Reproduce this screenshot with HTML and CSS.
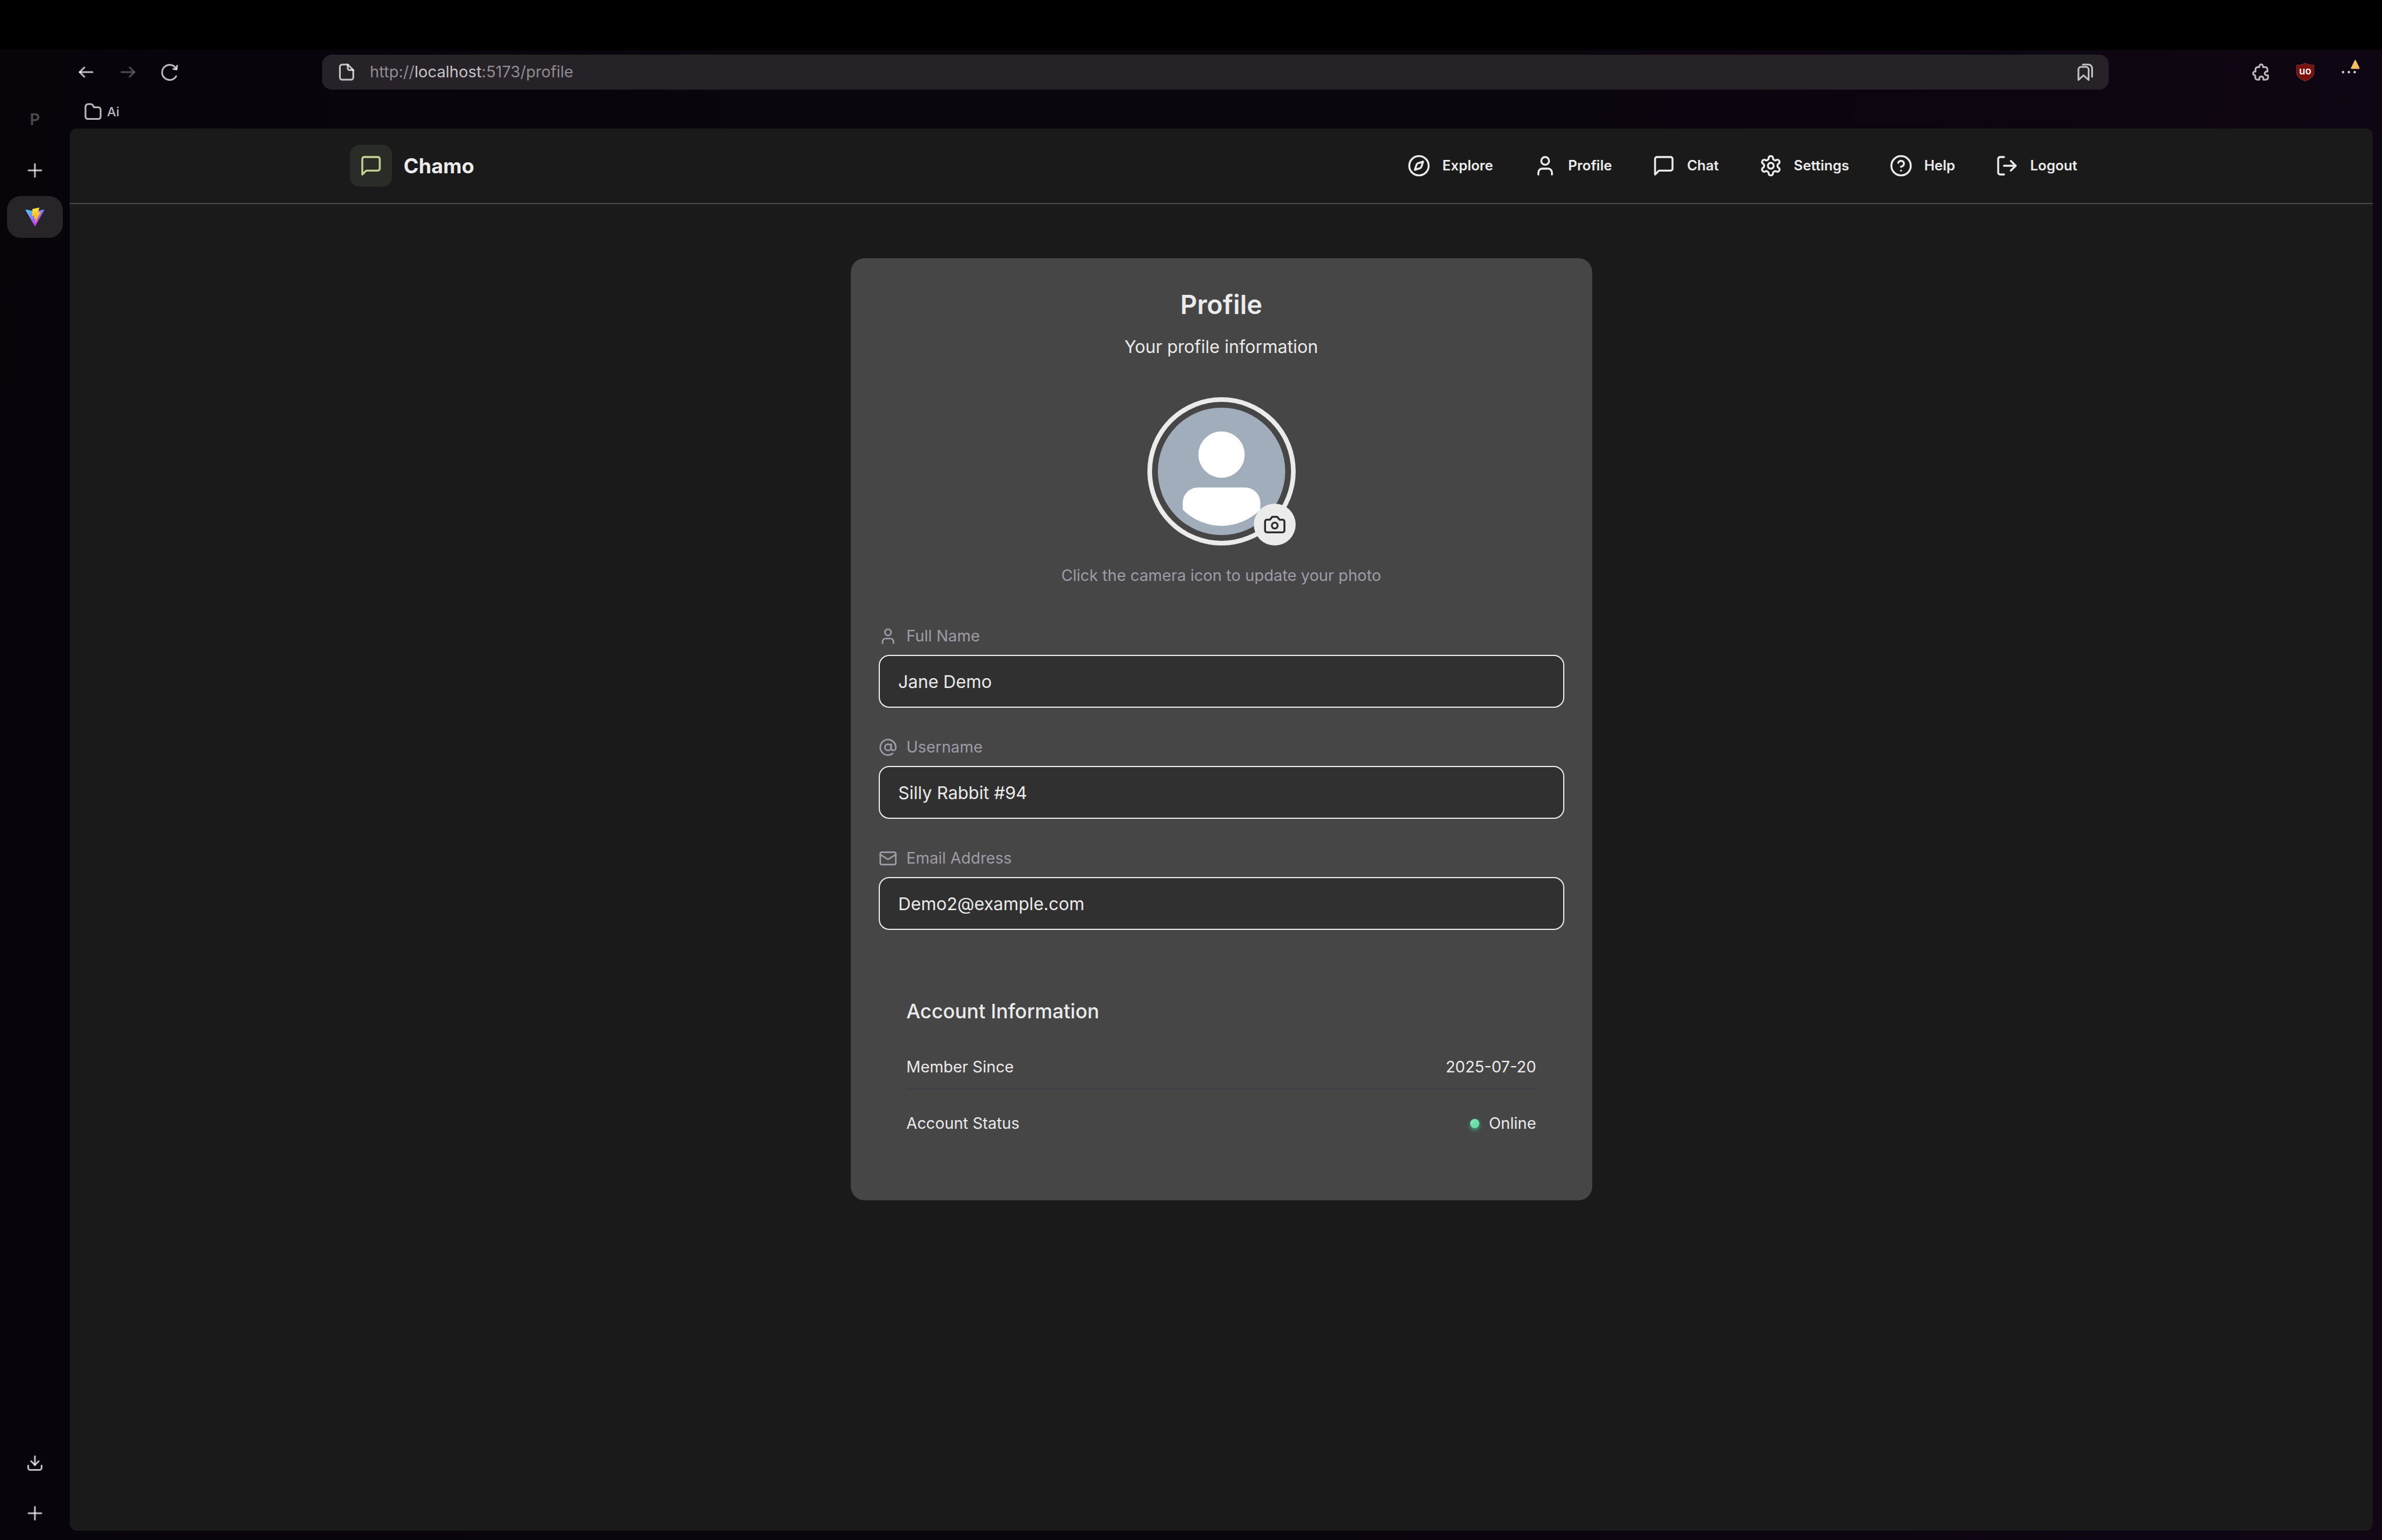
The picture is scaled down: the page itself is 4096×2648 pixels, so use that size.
FILE: index.html
```html
<!DOCTYPE html>
<html lang="en">
<head>
<meta charset="utf-8">
<title>Chamo - Profile</title>
<link rel="stylesheet" href="styles.css">
</head>
<body>
<div class="screen-strip"></div>
<div class="browser">
  <aside class="sidebar">
    <div class="space-name">P</div>
    <button class="icon-btn new-tab" aria-label="New tab">
      <svg class="glyph" viewBox="0 0 32 32"><path d="M16 5v22"/><path d="M5 16h22"/></svg>
    </button>
    <button class="tab" aria-label="Chamo tab">
      <svg class="vite" viewBox="0 0 256 257">
        <defs>
          <linearGradient id="va" x1="0" y1="0.08" x2="0.6" y2="0.85"><stop offset="0" stop-color="#41d1ff"/><stop offset="1" stop-color="#bd34fe"/></linearGradient>
          <linearGradient id="vb" x1="0.43" y1="0.02" x2="0.54" y2="0.9"><stop offset="0" stop-color="#ffea83"/><stop offset="0.083" stop-color="#ffdd35"/><stop offset="1" stop-color="#ffa800"/></linearGradient>
        </defs>
        <path fill="url(#va)" d="M255.153 37.938L134.897 252.976c-2.483 4.44-8.862 4.466-11.382.048L.875 37.958c-2.746-4.814 1.371-10.646 6.827-9.67l120.385 21.517a6.537 6.537 0 0 0 2.322-.004l117.867-21.483c5.438-.991 9.574 4.796 6.877 9.62Z"/>
        <path fill="url(#vb)" d="M185.432.063L96.44 17.501a3.268 3.268 0 0 0-2.634 3.014l-5.474 92.456a3.268 3.268 0 0 0 3.997 3.378l24.777-5.718c2.318-.535 4.413 1.507 3.936 3.838l-7.361 36.047c-.495 2.426 1.782 4.5 4.151 3.78l15.304-4.649c2.372-.72 4.652 1.36 4.15 3.788l-11.698 56.621c-.732 3.542 3.979 5.473 5.943 2.437l1.313-2.028l72.516-144.72c1.215-2.423-.88-5.186-3.54-4.672l-25.505 4.922c-2.396.462-4.435-1.77-3.759-4.114l16.646-57.705c.677-2.35-1.37-4.583-3.769-4.113Z"/>
      </svg>
    </button>
    <div class="sidebar-foot">
      <button class="icon-btn" aria-label="Downloads">
        <svg class="glyph" viewBox="0 0 32 32"><path d="M16 4v15"/><path d="M9.500 12.500 16 19l6.500-6.500"/><path d="M4.500 20v4a3.500 3.500 0 0 0 3.500 3.500h16a3.500 3.500 0 0 0 3.500-3.500v-4"/></svg>
      </button>
      <button class="icon-btn" aria-label="Create new">
        <svg class="glyph" viewBox="0 0 32 32"><path d="M16 5v22"/><path d="M5 16h22"/></svg>
      </button>
    </div>
  </aside>

  <div class="window">
    <div class="toolbar">
      <div class="toolbar-nav">
        <button class="icon-btn" aria-label="Back"><svg class="glyph" viewBox="0 0 32 32"><path d="M27 16H5"/><path d="M13 8 5 16l8 8"/></svg></button>
        <button class="icon-btn" aria-label="Forward" disabled><svg class="glyph" viewBox="0 0 32 32"><path d="M5 16h22"/><path d="M19 8l8 8-8 8"/></svg></button>
        <button class="icon-btn" aria-label="Reload"><svg class="glyph" viewBox="0 0 32 32"><path d="M27 23a13 13 0 1 1 0-13"/><path d="M28.500 5l-1 6.500-5.500-1"/></svg></button>
      </div>
      <div class="urlbar">
        <svg class="glyph" viewBox="0 0 32 32"><path d="M18 3H8.500A4 4 0 0 0 4.500 7v18a4 4 0 0 0 4 4h15a4 4 0 0 0 4-4V12.500z"/><path d="M18 3v6.500a3 3 0 0 0 3 3h6.500"/></svg>
        <div class="url">http://<b>localhost</b>:5173/profile</div>
        <svg class="glyph" viewBox="0 0 32 32"><path d="M4 29.500V11.500A4.500 4.500 0 0 1 8.500 7H17a4.500 4.500 0 0 1 4.500 4.500v18l-8.750-8z"/><path d="M11.500 3H21a6.500 6.500 0 0 1 6.500 6.500V24"/></svg>
      </div>
      <div class="toolbar-actions">
        <button class="icon-btn" aria-label="Extensions"><svg class="glyph" viewBox="0 0 32 32"><path d="M13 7.500V6a3.200 3.200 0 0 1 6.400 0v1.500H23.500A3.500 3.500 0 0 1 27 11v4h-1.500a3.200 3.200 0 0 0 0 6.400H28v4a3.500 3.500 0 0 1-3.500 3.500H20v-2a3.500 3.500 0 0 0-7 0v2H9.500A3.500 3.500 0 0 1 6 25.500v-4.100H5.500a3.200 3.200 0 0 1 0-6.400H6.500v-4A3.500 3.500 0 0 1 10 7.500z"/></svg></button>
        <button class="icon-btn" aria-label="uBlock Origin"><svg class="ublock" viewBox="0 0 32 32"><path d="M16 .5C12 3 6 4 1 4v13c0 7 7 11.500 15 14.500 8-3 15-7.500 15-14.500V4C26 4 20 3 16 .5z"/><text x="16" y="20" text-anchor="middle">uo</text></svg></button>
        <button class="icon-btn menu" aria-label="Menu"><svg class="dots" viewBox="0 0 32 32"><circle cx="5" cy="16" r="2.200"/><circle cx="15" cy="16" r="2.200"/><circle cx="25" cy="16" r="2.200"/></svg><svg class="warn" viewBox="0 0 20 20"><path d="M10 3 3.500 16.500h13z"/></svg></button>
      </div>
    </div>
    <div class="bookmarks">
      <button class="bookmark"><svg class="glyph" viewBox="0 0 32 32"><path d="M3 7.500A4.500 4.500 0 0 1 7.500 3h4.600a4 4 0 0 1 3.200 1.600L17.500 8.500H25A4 4 0 0 1 29 12.500v12a4 4 0 0 1-4 4H7a4 4 0 0 1-4-4z"/></svg>Ai</button>
    </div>

    <div class="page">
      <header class="header">
        <div class="header-inner">
          <a class="brand" href="#"><span class="brand-mark"><svg class="icon" viewBox="0 0 24 24"><path d="M21 15a2 2 0 0 1-2 2H7l-4 4V5a2 2 0 0 1 2-2h14a2 2 0 0 1 2 2z"/></svg></span>Chamo</a>
          <nav class="nav">
            <a href="#"><svg class="icon" viewBox="0 0 24 24"><circle cx="12" cy="12" r="10"/><path d="m16.240 7.760-1.804 5.411a2 2 0 0 1-1.265 1.265L7.760 16.240l1.804-5.411a2 2 0 0 1 1.265-1.265z"/></svg>Explore</a>
            <a href="#"><svg class="icon" viewBox="0 0 24 24"><path d="M19 21v-2a4 4 0 0 0-4-4H9a4 4 0 0 0-4 4v2"/><circle cx="12" cy="7" r="4"/></svg>Profile</a>
            <a href="#"><svg class="icon" viewBox="0 0 24 24"><path d="M21 15a2 2 0 0 1-2 2H7l-4 4V5a2 2 0 0 1 2-2h14a2 2 0 0 1 2 2z"/></svg>Chat</a>
            <a href="#"><svg class="icon" viewBox="0 0 24 24"><path d="M12.220 2h-.44a2 2 0 0 0-2 2v.18a2 2 0 0 1-1 1.730l-.43.25a2 2 0 0 1-2 0l-.15-.08a2 2 0 0 0-2.730.73l-.22.38a2 2 0 0 0 .73 2.730l.15.1a2 2 0 0 1 1 1.720v.51a2 2 0 0 1-1 1.740l-.15.09a2 2 0 0 0-.73 2.730l.22.38a2 2 0 0 0 2.730.73l.15-.08a2 2 0 0 1 2 0l.43.25a2 2 0 0 1 1 1.730V20a2 2 0 0 0 2 2h.44a2 2 0 0 0 2-2v-.18a2 2 0 0 1 1-1.730l.43-.25a2 2 0 0 1 2 0l.15.08a2 2 0 0 0 2.730-.73l.22-.39a2 2 0 0 0-.73-2.730l-.15-.08a2 2 0 0 1-1-1.740v-.5a2 2 0 0 1 1-1.740l.15-.09a2 2 0 0 0 .73-2.730l-.22-.38a2 2 0 0 0-2.730-.73l-.15.08a2 2 0 0 1-2 0l-.43-.25a2 2 0 0 1-1-1.730V4a2 2 0 0 0-2-2z"/><circle cx="12" cy="12" r="3"/></svg>Settings</a>
            <a href="#"><svg class="icon" viewBox="0 0 24 24"><circle cx="12" cy="12" r="10"/><path d="M9.090 9a3 3 0 0 1 5.830 1c0 2-3 3-3 3"/><path d="M12 17h.01"/></svg>Help</a>
            <a href="#"><svg class="icon" viewBox="0 0 24 24"><path d="M9 21H5a2 2 0 0 1-2-2V5a2 2 0 0 1 2-2h4"/><path d="m16 17 5-5-5-5"/><path d="M21 12H9"/></svg>Logout</a>
          </nav>
        </div>
      </header>

      <main class="main">
        <section class="card">
          <h1>Profile</h1>
          <p class="subtitle">Your profile information</p>
          <div class="avatar">
            <svg class="photo" viewBox="0 0 220 220" role="img" aria-label="Profile photo">
              <circle cx="110" cy="110" r="110" fill="#a2adbc"/>
              <circle cx="110" cy="81" r="40" fill="#fff"/>
              <path fill="#fff" d="M43 176V164a26 26 0 0 1 26-26h82a26 26 0 0 1 26 26v12a94 94 0 0 1-134 0z"/>
            </svg>
            <button class="camera" aria-label="Update photo"><svg class="icon" viewBox="0 0 24 24"><path d="M14.500 4h-5L7 7H4a2 2 0 0 0-2 2v9a2 2 0 0 0 2 2h16a2 2 0 0 0 2-2V9a2 2 0 0 0-2-2h-3l-2.500-3z"/><circle cx="12" cy="13" r="3"/></svg></button>
          </div>
          <p class="hint">Click the camera icon to update your photo</p>

          <form class="fields">
            <div class="field">
              <label for="name"><svg class="icon" viewBox="0 0 24 24"><path d="M19 21v-2a4 4 0 0 0-4-4H9a4 4 0 0 0-4 4v2"/><circle cx="12" cy="7" r="4"/></svg>Full Name</label>
              <input id="name" type="text" value="Jane Demo">
            </div>
            <div class="field">
              <label for="user"><svg class="icon" viewBox="0 0 24 24"><circle cx="12" cy="12" r="4"/><path d="M16 8v5a3 3 0 0 0 6 0v-1a10 10 0 1 0-4 8"/></svg>Username</label>
              <input id="user" type="text" value="Silly Rabbit #94">
            </div>
            <div class="field">
              <label for="email"><svg class="icon" viewBox="0 0 24 24"><rect x="2" y="4" width="20" height="16" rx="2"/><path d="m22 7-8.970 5.700a1.940 1.940 0 0 1-2.060 0L2 7"/></svg>Email Address</label>
              <input id="email" type="email" value="Demo2@example.com">
            </div>
          </form>

          <div class="account">
            <h2>Account Information</h2>
            <dl>
              <div class="row"><dt>Member Since</dt><dd>2025-07-20</dd></div>
              <div class="row"><dt>Account Status</dt><dd><span class="status"></span>Online</dd></div>
            </dl>
          </div>
        </section>
      </main>
    </div>
  </div>
</div>
</body>
</html>
```
FILE: styles.css
```css
* { box-sizing: border-box; }

body {
  margin: 0;
  min-height: 100vh;
  display: flex;
  flex-direction: column;
  background: #000;
  color: #ebebeb;
  font-family: Inter, "Liberation Sans", sans-serif;
  font-size: 27px;
  line-height: 40px;
}

button {
  margin: 0;
  padding: 0;
  border: 0;
  background: none;
  color: inherit;
  font: inherit;
}

a { color: inherit; text-decoration: none; }

h1, h2, p, dl, dd { margin: 0; }

.screen-strip { height: 86px; }

.browser {
  flex: 1;
  display: flex;
  background: linear-gradient(100deg, #07040a 0%, #0b050d 30%, #0b050e 60%, #100614 100%);
}

/* Browser chrome */

.glyph {
  width: 32px;
  height: 32px;
  flex: none;
  fill: none;
  stroke: #fff;
  stroke-opacity: 0.72;
  stroke-width: 3;
  stroke-linecap: round;
  stroke-linejoin: round;
}

.icon-btn {
  width: 56px;
  height: 56px;
  display: grid;
  place-items: center;
}

.icon-btn:disabled { opacity: 0.4; }

.sidebar {
  width: 120px;
  padding: 92px 12px 18px;
  display: flex;
  flex-direction: column;
  align-items: center;
}

.space-name {
  color: #4c4a4e;
  font-size: 27px;
  font-weight: 600;
  line-height: 56px;
}

.new-tab { margin: 31px 0 16px; }

.tab {
  width: 100%;
  height: 72px;
  border-radius: 24px;
  background: #282529;
  display: grid;
  place-items: center;
}

.vite { width: 32px; height: 32px; }

.sidebar-foot {
  margin-top: auto;
  display: flex;
  flex-direction: column;
  gap: 30px;
}

.window {
  flex: 1;
  min-width: 0;
  padding-bottom: 16px;
  display: flex;
  flex-direction: column;
}

.toolbar {
  height: 76px;
  padding-right: 28px;
  display: flex;
  align-items: center;
}

.toolbar-nav { display: flex; gap: 16px; }

.toolbar-actions { display: flex; gap: 20px; }

.urlbar {
  flex: 1;
  height: 60px;
  margin: 0 234px;
  padding: 0 24px 0 26px;
  border-radius: 16px;
  background: #262228;
  display: flex;
  align-items: center;
  gap: 24px;
}

.url { flex: 1; color: #8f8d91; }

.url b { color: #c6c5c8; font-weight: 400; }

.ublock { width: 32px; height: 32px; }

.ublock path { fill: #7b110d; stroke: #6a3a3c; }

.ublock text { fill: #fff; font-size: 17px; font-weight: 600; }

.dots { width: 32px; height: 32px; fill: #c6c5c8; }

.menu { position: relative; }

.warn {
  position: absolute;
  top: 5px;
  right: 8px;
  width: 20px;
  height: 20px;
  fill: #f7bd60;
  stroke: #f7bd60;
  stroke-width: 2;
  stroke-linejoin: round;
}

.bookmarks {
  height: 59px;
  padding-left: 24px;
  display: flex;
  align-items: center;
}

.bookmark {
  display: flex;
  align-items: center;
  gap: 8px;
  color: #b9b8bb;
  font-size: 22px;
  font-weight: 500;
}

/* Application */

.page {
  flex: 1;
  margin-right: 16px;
  border-radius: 12px;
  background: #1a1a1a;
}

.icon {
  width: 40px;
  height: 40px;
  flex: none;
  fill: none;
  stroke: currentColor;
  stroke-width: 2;
  stroke-linecap: round;
  stroke-linejoin: round;
}

.header { border-bottom: 2px solid #484848; }

.header-inner {
  max-width: 2996px;
  height: 128px;
  margin: 0 auto;
  display: flex;
  align-items: center;
  justify-content: space-between;
}

.brand {
  display: flex;
  align-items: center;
  gap: 20px;
  font-size: 35px;
  font-weight: 700;
}

.brand-mark {
  width: 72px;
  height: 72px;
  border-radius: 16px;
  background: #2a2c27;
  color: #c2d394;
  display: grid;
  place-items: center;
}

.nav { display: flex; gap: 17px; }

.nav a {
  padding: 0 26px;
  display: flex;
  align-items: center;
  gap: 20px;
  font-size: 24px;
  font-weight: 600;
}

.main { padding: 93px 32px; }

.card {
  max-width: 1275px;
  margin: 0 auto;
  padding: 48px;
  border-radius: 24px;
  background: #464646;
}

.card h1 {
  font-size: 45px;
  font-weight: 600;
  line-height: 64px;
  text-align: center;
}

.subtitle {
  margin: 16px 0 63px;
  font-size: 30px;
  line-height: 48px;
  text-align: center;
}

.avatar {
  position: relative;
  width: 255px;
  height: 255px;
  margin: 0 auto 32px;
  border: 8px solid #ebebeb;
  border-radius: 50%;
  display: grid;
  place-items: center;
}

.photo { width: 219px; height: 219px; }

.camera {
  position: absolute;
  right: -8px;
  bottom: -8px;
  width: 72px;
  height: 72px;
  border-radius: 50%;
  background: #ebebeb;
  color: #2d2d2d;
  display: grid;
  place-items: center;
}

.hint { color: #9f9ca8; text-align: center; }

.fields {
  margin: 64px 0;
  display: flex;
  flex-direction: column;
  gap: 48px;
}

.field { display: flex; flex-direction: column; gap: 12px; }

.field label {
  display: flex;
  align-items: center;
  gap: 16px;
  color: #9f9ca8;
}

.field .icon { width: 32px; height: 32px; }

.field input {
  width: 100%;
  height: 91px;
  padding: 0 32px;
  border: 2px solid #ebebeb;
  border-radius: 18px;
  background: #303030;
  color: #ebebeb;
  font: inherit;
  font-size: 30px;
}

.account { padding: 48px; }

.account h2 {
  margin-bottom: 32px;
  font-size: 34px;
  font-weight: 500;
  line-height: 56px;
}

.account dl { display: flex; flex-direction: column; gap: 23px; }

.row {
  padding: 16px 0;
  display: flex;
  justify-content: space-between;
}

.row:not(:last-child) { border-bottom: 2px solid #3f3f46; }

.row dd { display: flex; align-items: center; gap: 16px; }

.status {
  width: 16px;
  height: 16px;
  border-radius: 50%;
  background: linear-gradient(135deg, #8ce6c2, #5cd49d);
  box-shadow: 0 3px 7px #36d399aa;
}
```
